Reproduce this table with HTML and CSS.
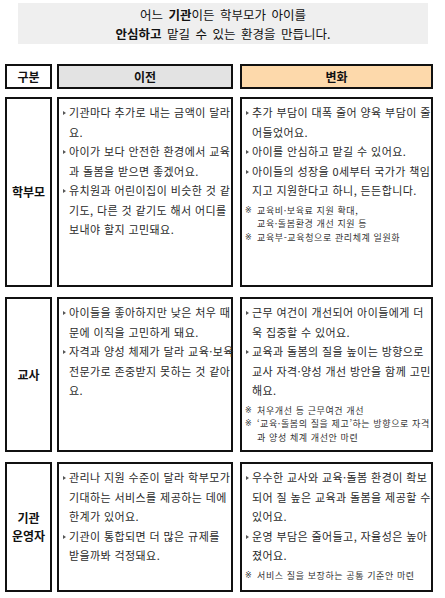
FILE: index.html
```html
<!DOCTYPE html>
<html lang="ko">
<head>
<meta charset="utf-8">
<link rel="stylesheet" href="styles.css">
</head>
<body>
<div class="page">
  <div class="title">
    <p>어느 <b>기관</b>이든 학부모가 아이를</p>
    <p><b>안심하고</b> 맡길 수 있는 환경을 만듭니다.</p>
  </div>

  <div class="row head">
    <div class="cell label">구분</div>
    <div class="cell hd before">이전</div>
    <div class="cell hd after">변화</div>
  </div>

  <div class="row r1">
    <div class="cell label">학부모</div>
    <div class="cell body">
      <div class="item"><span class="bul"></span><span class="txt">기관마다 추가로 내는 금액이 달라<br>요.</span></div>
      <div class="item"><span class="bul"></span><span class="txt">아이가 보다 안전한 환경에서 교육<br>과 돌봄을 받으면 좋겠어요.</span></div>
      <div class="item"><span class="bul"></span><span class="txt">유치원과 어린이집이 비슷한 것 같<br>기도, 다른 것 같기도 해서 어디를<br>보내야 할지 고민돼요.</span></div>
    </div>
    <div class="cell body">
      <div class="item"><span class="bul"></span><span class="txt">추가 부담이 대폭 줄어 양육 부담이 줄<br>어들었어요.</span></div>
      <div class="item"><span class="bul"></span><span class="txt">아이를 안심하고 맡길 수 있어요.</span></div>
      <div class="item"><span class="bul"></span><span class="txt">아이들의 성장을 0세부터 국가가 책임<br>지고 지원한다고 하니, 든든합니다.</span></div>
      <div class="notes">
        <div class="note"><span class="mk">※&#xFE0E;</span><span>교육비·보육료 지원 확대,<br>교육·돌봄환경 개선 지원 등</span></div>
        <div class="note"><span class="mk">※&#xFE0E;</span><span>교육부-교육청으로 관리체계 일원화</span></div>
      </div>
    </div>
  </div>

  <div class="row r2">
    <div class="cell label">교사</div>
    <div class="cell body">
      <div class="item"><span class="bul"></span><span class="txt">아이들을 좋아하지만 낮은 처우 때<br>문에 이직을 고민하게 돼요.</span></div>
      <div class="item"><span class="bul"></span><span class="txt">자격과 양성 체제가 달라 교육·보육<br>전문가로 존중받지 못하는 것 같아<br>요.</span></div>
    </div>
    <div class="cell body">
      <div class="item"><span class="bul"></span><span class="txt">근무 여건이 개선되어 아이들에게 더<br>욱 집중할 수 있어요.</span></div>
      <div class="item"><span class="bul"></span><span class="txt">교육과 돌봄의 질을 높이는 방향으로<br>교사 자격·양성 개선 방안을 함께 고민<br>해요.</span></div>
      <div class="notes">
        <div class="note"><span class="mk">※&#xFE0E;</span><span>처우개선 등 근무여건 개선</span></div>
        <div class="note"><span class="mk">※&#xFE0E;</span><span>‘교육·돌봄의 질을 제고’하는 방향으로 자격<br>과 양성 체계 개선안 마련</span></div>
      </div>
    </div>
  </div>

  <div class="row r3">
    <div class="cell label">기관<br>운영자</div>
    <div class="cell body">
      <div class="item"><span class="bul"></span><span class="txt">관리나 지원 수준이 달라 학부모가<br>기대하는 서비스를 제공하는 데에<br>한계가 있어요.</span></div>
      <div class="item"><span class="bul"></span><span class="txt">기관이 통합되면 더 많은 규제를<br>받을까봐 걱정돼요.</span></div>
    </div>
    <div class="cell body">
      <div class="item"><span class="bul"></span><span class="txt">우수한 교사와 교육·돌봄 환경이 확보<br>되어 질 높은 교육과 돌봄을 제공할 수<br>있어요.</span></div>
      <div class="item"><span class="bul"></span><span class="txt">운영 부담은 줄어들고, 자율성은 높아<br>졌어요.</span></div>
      <div class="notes">
        <div class="note"><span class="mk">※&#xFE0E;</span><span>서비스 질을 보장하는 공통 기준안 마련</span></div>
      </div>
    </div>
  </div>
</div>
</body>
</html>
```

FILE: styles.css
```css
html, body {
  margin: 0;
  padding: 0;
  background: #ffffff;
}

body {
  font-family: "Noto Sans CJK KR", "Noto Sans", sans-serif;
  color: #222;
}

.page {
  width: 445px;
  padding: 3px 10px 0 5px;
  box-sizing: border-box;
}

.title {
  margin: 0 7px 0 13px;
  height: 41px;
  background: #efefef;
  display: flex;
  flex-direction: column;
  justify-content: center;
  align-items: center;
  font-size: 12.5px;
  line-height: 19px;
  word-spacing: 2px;
  color: #111;
}

.title p {
  margin: 0;
}

.title b {
  font-weight: 700;
}

.row {
  display: grid;
  grid-template-columns: 47px 176px 195px;
  column-gap: 5px;
  margin-top: 10px;
}

.row > .cell:nth-child(3) {
  margin-left: 2px;
}

.head {
  margin-top: 20px;
  height: 25px;
}

.r1 { height: 190px; margin-top: 8px; }
.r2 { height: 155px; }
.r3 { height: 130px; }

.cell {
  border: 2px solid #111;
  box-sizing: border-box;
}

.label {
  display: flex;
  align-items: center;
  justify-content: center;
  text-align: center;
  font-size: 12px;
  line-height: 18px;
  font-weight: 700;
  color: #111;
}

.hd {
  display: flex;
  align-items: center;
  justify-content: center;
  font-size: 12px;
  font-weight: 700;
  color: #111;
}

.before { background: #e3e3e3; }
.after { background: #fdd9ab; }

.body {
  padding: 4px 0 0 3px;
  font-size: 11px;
  letter-spacing: 0.4px;
  line-height: 19.5px;
  color: #2a2a2a;
}

.item {
  display: flex;
  white-space: nowrap;
}

.bul {
  flex: none;
  width: 0;
  height: 0;
  margin: 8px 3px 0 1px;
  border-left: 3px solid #555;
  border-top: 2px solid transparent;
  border-bottom: 2px solid transparent;
}

.notes {
  margin-top: 3px;
  font-size: 9px;
  letter-spacing: 0.6px;
  line-height: 13.5px;
  color: #333;
}

.note {
  display: flex;
  white-space: nowrap;
}

.mk {
  flex: none;
  width: 12px;
  font-family: "DejaVu Sans", sans-serif;
  letter-spacing: 0;
  font-size: 8px;
  color: #333;
}
```
